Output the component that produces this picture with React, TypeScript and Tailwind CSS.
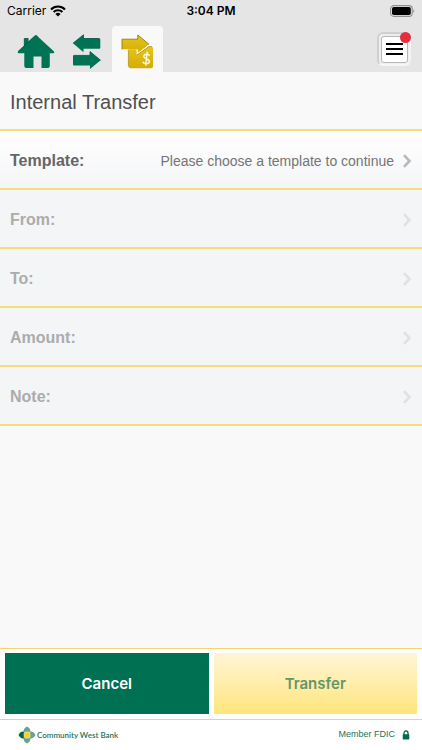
import React from "react";

interface TransferField {
  id: string;
  label: string;
  value: string;
  disabled: boolean;
}

const fields: TransferField[] = [
  {
    id: "template",
    label: "Template:",
    value: "Please choose a template to continue",
    disabled: false,
  },
  { id: "from", label: "From:", value: "", disabled: true },
  { id: "to", label: "To:", value: "", disabled: true },
  { id: "amount", label: "Amount:", value: "", disabled: true },
  { id: "note", label: "Note:", value: "", disabled: true },
];

const WifiIcon: React.FC = () => (
  <svg width="16" height="12" viewBox="0 0 16 12" aria-hidden="true">
    <g fill="none" stroke="#000" strokeWidth="2.1">
      <path d="M1 4.4a10 10 0 0 1 14 0" />
      <path d="M3.6 7.1a6.3 6.3 0 0 1 8.8 0" />
    </g>
    <path d="M8 11.6 5.4 9a3.8 3.8 0 0 1 5.2 0z" fill="#000" />
  </svg>
);

const BatteryIcon: React.FC = () => (
  <svg width="25" height="12" viewBox="0 0 25 12" aria-hidden="true">
    <rect x=".6" y=".6" width="21.6" height="10.8" rx="3.2" fill="none" stroke="#8f8f8f" strokeWidth="1.1" />
    <rect x="2" y="2" width="18.8" height="8" rx="1.8" fill="#000" />
    <path d="M23.3 4.2c1.4.6 1.4 3 0 3.6z" fill="#8f8f8f" />
  </svg>
);

const HomeIcon: React.FC = () => (
  <svg width="38" height="34" viewBox="0 0 38 34" aria-hidden="true">
    <path
      d="M17.5 1.2q1.5-1.2 3 0L37 16.6q1 1.6-.8 1.6h-3.4V31q0 2-2 2h-6.3V21.4h-8V33H9.3q-2 0-2-2V18.2H1.8q-1.8 0-.8-1.6l6.3-5.8V3.6h4.2v3z"
      fill="#007355"
    />
    <path d="M7.3 10.8V3.6h4.2M1 16.6 17.5 1.2q1.5-1.2 3 0" fill="none" stroke="#00513d" strokeWidth=".8" />
  </svg>
);

const ArrowsIcon: React.FC = () => (
  <svg width="30" height="36" viewBox="0 0 30 36" aria-hidden="true">
    <g fill="#007355">
      <path d="M1 9.2 11.5.8v3.7h15.8q1 0 1 1v8.2q0 1-1 1H11.5v3.6z" />
      <path d="M28.6 26.3 18 17.6v3.8H2q-1 0-1 1v8q0 1 1 1h16v3.7z" />
    </g>
    <g fill="none" stroke="#00513d" strokeWidth=".8">
      <path d="M1 9.2 11.5.8v3.7h16" />
      <path d="M18 21.4v-3.8l10.6 8.7M1.4 21.4H18" />
    </g>
  </svg>
);

const TransferIcon: React.FC = () => (
  <svg width="33" height="36" viewBox="0 0 33 36" aria-hidden="true">
    <defs>
      <linearGradient id="gold" x1="0" y1="0" x2="0" y2="1">
        <stop offset="0" stopColor="#e6c51c" />
        <stop offset="1" stopColor="#d3ad05" />
      </linearGradient>
    </defs>
    <path
      d="M7.4 15.3h8.2v5.5l12.2-8.3h2.6q1.6 0 1.6 1.6v18.1q0 2-2 2H9.4q-2 0-2-2z"
      fill="url(#gold)"
    />
    <path d="M1 5.2h15.8V1L28 10.3 16.8 19.2v-3.9H1z" fill="url(#gold)" />
    <path d="M1 15.3V5.2h15.8V1L28 10.3" fill="none" stroke="#957b10" strokeWidth=".9" />
    <path d="M7.4 16v16.4M16 21l11.8-8.4H31" fill="none" stroke="#a98c12" strokeWidth=".7" />
    <path d="M16.6 15.8v3.8l11-8.2" fill="none" stroke="#fff7cf" strokeWidth=".9" />
    <path
      d="M28.6 21.8c-.8-2.2-5.6-2.2-5.8.6-.2 3 5.8 2.2 5.6 5.2-.2 3-5.8 2.6-6.6.2M26.3 17.6l-1.7 14"
      fill="none"
      stroke="#fffbe0"
      strokeWidth="1.4"
    />
  </svg>
);

const ChevronIcon: React.FC<{ className: string }> = ({ className }) => (
  <svg width="10" height="14" viewBox="0 0 10 14" className={className} aria-hidden="true">
    <path d="M2 1.2 7.5 7 2 12.8" fill="none" stroke="currentColor" strokeWidth="2.6" />
  </svg>
);

const BankLogo: React.FC = () => (
  <svg width="18" height="18" viewBox="0 0 18 18" aria-hidden="true">
    <g fill="#6da18d">
      <path d="M9 .5q3.4 1.8 3.4 4.5T9 8.5Q5.6 7.7 5.6 5T9 .5z" />
      <path d="M9 17.5q3.4-1.8 3.4-4.5T9 9.5Q5.6 10.3 5.6 13T9 17.5z" />
      <path d="M17.5 9q-1.8-3.4-4.5-3.4T9.5 9q.8 3.4 3.5 3.4T17.5 9z" />
    </g>
    <path d="M.5 9q1.8-3.4 4.5-3.4T8.5 9q-.8 3.4-3.5 3.4T.5 9z" fill="#00664c" />
    <rect x="6" y="6" width="6" height="6" rx="1.4" fill="#f3d221" stroke="#fff" strokeWidth=".5" />
  </svg>
);

const LockIcon: React.FC = () => (
  <svg width="8" height="10" viewBox="0 0 8 10" aria-hidden="true">
    <path d="M2 5V3a2 2 0 0 1 4 0v2" fill="none" stroke="#006b4f" strokeWidth="1.3" />
    <rect x=".7" y="4.2" width="6.6" height="5.2" rx=".6" fill="#006b4f" />
  </svg>
);

const App: React.FC = () => {
  return (
    <div className="flex min-h-screen flex-col bg-[#f9f9f9] font-['Liberation_Sans',sans-serif]">
      <header className="bg-[#e5e5e5]">
        {/* Status bar */}
        <div className="grid h-[22px] grid-cols-3 items-center px-[7px] font-['Inter',sans-serif] text-[12px] text-black">
          <div className="flex items-center gap-1">
            <span>Carrier</span>
            <WifiIcon />
          </div>
          <span className="text-center font-semibold">3:04 PM</span>
          <div className="flex justify-end">
            <BatteryIcon />
          </div>
        </div>

        {/* Tabs */}
        <nav className="flex h-[50px] items-end justify-between pr-[11px] pl-[10px]">
          <div className="flex items-end">
            <button type="button" aria-label="Home" className="flex h-[46px] w-[51px] items-center justify-center pt-[6px]">
              <HomeIcon />
            </button>
            <button type="button" aria-label="Transfers" className="flex h-[46px] w-[51px] items-center justify-center pt-[6px]">
              <ArrowsIcon />
            </button>
            <button
              type="button"
              aria-label="Internal transfer"
              className="flex h-[46px] w-[51px] items-center justify-center rounded-t-[4px] bg-[#f9f9f9] pt-[6px]"
            >
              <TransferIcon />
            </button>
          </div>
          <button
            type="button"
            aria-label="Menu"
            className="relative mb-[6px] flex size-[34px] items-center justify-center rounded-[6px] border-2 border-t-[#cfcfcf] border-r-[#f3f3f3] border-b-[#f6f6f6] border-l-[#cfcfcf] bg-[#eeeeee]"
          >
            <span className="flex size-[27px] flex-col items-center justify-center gap-[3px] rounded-[3px] border border-[#b8b8b8] bg-white">
              <span className="h-[2px] w-[17px] bg-black" />
              <span className="h-[2px] w-[17px] bg-black" />
              <span className="h-[2px] w-[17px] bg-black" />
            </span>
            <span className="absolute -top-[2px] -right-[2px] size-[11px] rounded-full bg-[#e62e3b]" />
          </button>
        </nav>
      </header>

      <main className="flex-1">
        <h1 className="flex h-[59px] items-center border-b-2 border-[#f6dc7a] px-[10px] pt-[2px] text-[20px] text-[#505050]">
          Internal Transfer
        </h1>
        {fields.map((field) => (
          <button
            key={field.id}
            type="button"
            disabled={field.disabled}
            className="flex h-[59px] w-full items-center border-b-2 border-[#f6dc7a] bg-linear-to-b from-white to-[#f4f5f7] px-[10px] pt-[3px] text-[#666666] disabled:from-[#f4f5f7] disabled:text-[#acacac]"
          >
            <span className="text-[16px] font-bold">{field.label}</span>
            <span className="ml-auto text-[14px] text-[#757575]">{field.value}</span>
            <ChevronIcon className={field.disabled ? "ml-2 text-[#e0e1e3]" : "ml-2 text-[#b9b9b9]"} />
          </button>
        ))}
      </main>

      <footer className="bg-white">
        <div className="flex h-[72px] gap-[5px] border-y border-[#f5d36e] p-[5px] pt-1 font-['Inter',sans-serif]">
          <button type="button" className="flex-1 bg-[#007053] pt-[2px] text-[15px] font-semibold text-white">
            Cancel
          </button>
          <button
            type="button"
            disabled
            className="flex-1 bg-linear-to-b from-[#fff5d6] to-[#ffe578] pt-[2px] text-[15px] font-semibold text-[#63976b]"
          >
            Transfer
          </button>
        </div>
        <div className="flex h-[30px] items-center justify-between pr-[12px] pl-[18px] text-[#1c7259]">
          <div className="flex items-center gap-px">
            <BankLogo />
            <span className="font-['Lato',sans-serif] text-[8px] font-semibold">Community West Bank</span>
          </div>
          <div className="flex items-center gap-[7px]">
            <span className="text-[9px]">Member FDIC</span>
            <LockIcon />
          </div>
        </div>
      </footer>
    </div>
  );
};

export default App;
